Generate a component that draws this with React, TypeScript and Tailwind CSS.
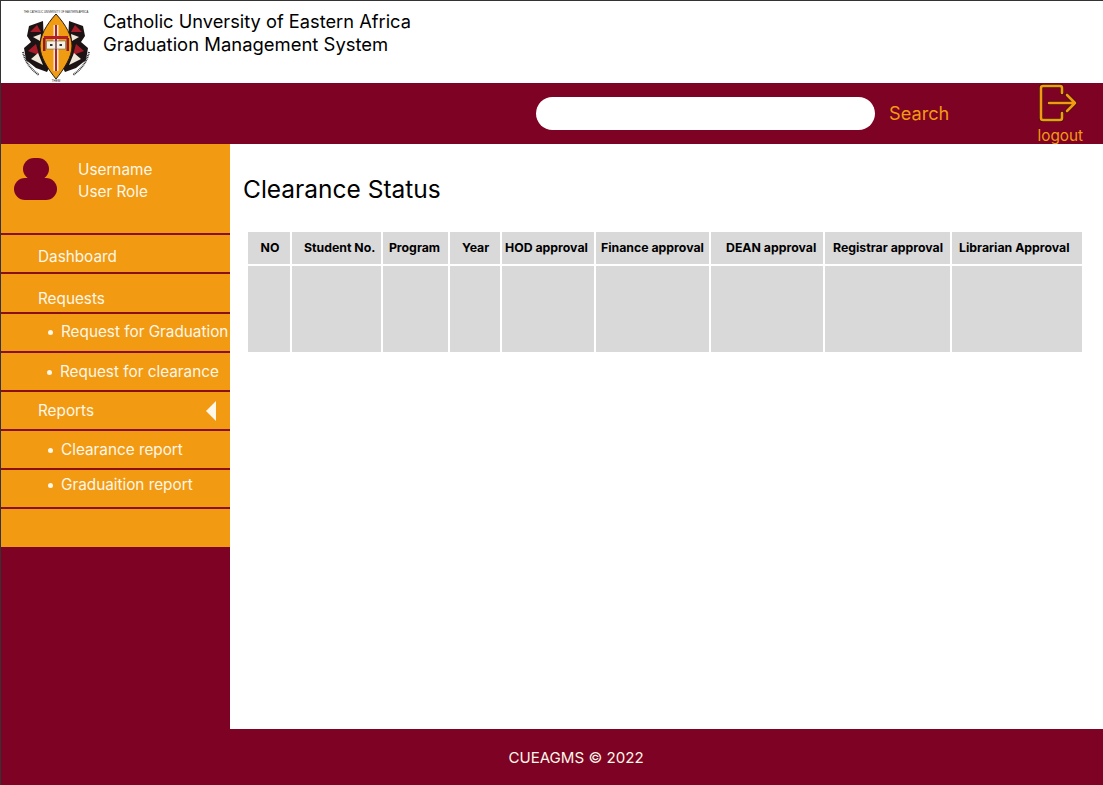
const columns = [
  { label: "NO", width: "w-[42px]", text: "text-center pl-[2px]" },
  { label: "Student No.", width: "w-[89px]", text: "pl-[12px]" },
  { label: "Program", width: "w-[65px]", text: "text-center pr-[2px]", up: true },
  { label: "Year", width: "w-[50px]", text: "pl-[12px]", up: true },
  { label: "HOD approval", width: "w-[92px]", text: "pl-[3px]", up: true },
  { label: "Finance approval", width: "w-[113px]", text: "pl-[5px]", up: true },
  { label: "DEAN approval", width: "w-[112px]", text: "pl-[15px]" },
  { label: "Registrar approval", width: "w-[125px]", text: "pl-[8px]", up: true },
  { label: "Librarian Approval", width: "w-[130px]", text: "pl-[7px]", up: true },
]

function Logo() {
  return (
    <svg width="72" height="74" viewBox="0 0 72 74" className="shrink-0">
      <text x="36" y="4.5" textAnchor="middle" fontSize="2.7" fill="#222" fontFamily="Liberation Sans, sans-serif">
        THE CATHOLIC UNIVERSITY OF EASTERN AFRICA
      </text>
      {/* side shields */}
      <path d="M23 13 L9 18 L7 28 L11 34 L4 40 L6 52 L16 60 L27 64 L34 50 L24 34 Z" fill="#1c1414" />
      <path d="M49 13 L63 18 L65 28 L61 34 L68 40 L66 52 L56 60 L45 64 L38 50 L48 34 Z" fill="#1c1414" />
      <path d="M10 24 L17 17 L21 24 Z M51 24 L55 17 L62 24 Z M8 43 L16 36 L19 47 Z M64 43 L56 36 L53 47 Z" fill="#a81c28" />
      <path d="M11 51 L18 45 L23 57 Z M61 51 L54 45 L49 57 Z M13 29 L21 26 L20 33 Z M59 29 L51 26 L52 33 Z" fill="#efe7da" />
      {/* motto arcs, unreadable at this size */}
      <path d="M3 44 Q6 58 19 67" fill="none" stroke="#333" strokeWidth="2" strokeDasharray="1 0.7" />
      <path d="M69 44 Q66 58 53 67" fill="none" stroke="#333" strokeWidth="2" strokeDasharray="1 0.7" />
      {/* spear shield */}
      <path d="M36 6 C46 17 52 28 52 38 C52 49 44 61 36 71 C28 61 20 49 20 38 C20 28 26 17 36 6 Z" fill="#f09c12" stroke="#2a1a10" strokeWidth="1" />
      {/* cross and book */}
      <path d="M33.5 17 H38.5 V63 H33.5 Z" fill="#efe7da" />
      <path d="M35 17 H37 V63 H35 Z" fill="#b3202a" />
      <path d="M24 28 H48 V31 H24 Z" fill="#b3202a" />
      <path d="M26.5 33 H35.5 V41 H26.5 Z M36.5 33 H45.5 V41 H36.5 Z" fill="#f5f0e6" stroke="#555" strokeWidth="0.5" />
      <path d="M23 30 H25.5 V43 H23 Z M46.5 30 H49 V43 H46.5 Z" fill="#8d1c26" />
      <path d="M30 36 H32.5 V38 H30 Z M39.5 36 H42 V38 H39.5 Z" fill="#333" />
      <text x="36" y="73.5" textAnchor="middle" fontSize="3" fill="#222" fontFamily="Liberation Sans, sans-serif">THEM</text>
    </svg>
  )
}

function NavRow({ label, bullet, arrow, pad }: { label?: string; bullet?: boolean; arrow?: boolean; pad: string }) {
  return (
    <div className={`flex items-center border-b-2 border-[#8a0f1c] whitespace-nowrap ${pad} ${bullet ? "" : "pl-[37px]"}`}>
      {bullet && <span className="mr-[8px] h-[5px] w-[5px] shrink-0 rounded-full bg-[#fff7e8]" />}
      <span className="flex-1">{label}</span>
      {arrow && <span className="mr-[14px] h-0 w-0 border-y-[10px] border-r-[10px] border-y-transparent border-r-[#fff7e8]" />}
    </div>
  )
}

export default function App() {
  return (
    <div className="flex h-[785px] w-[1103px] flex-col overflow-hidden border-l border-t border-[#333] bg-white font-['Inter',sans-serif]">
      <header className="flex h-[82px] shrink-0 items-start pl-[19px] pt-[7px]">
        <Logo />
        <div className="ml-[11px] pt-[2px] text-[18.25px] leading-[23px] text-black">
          <div>Catholic Unversity of Eastern Africa</div>
          <div className="text-[18.45px]">Graduation Management System</div>
        </div>
      </header>

      <div className="flex h-[61px] shrink-0 items-center bg-[#7d0224] pl-[535px]">
        <div className="h-[33px] w-[339px] rounded-full bg-white" />
        <span className="ml-[14px] text-[18.2px] text-[#f39a12]">Search</span>
        <div className="ml-[88px] flex w-[46px] flex-col items-center">
          <svg width="38" height="38" viewBox="0 0 38 38" fill="none" strokeLinejoin="round" strokeLinecap="round" className="-ml-[4px] mt-[1px]">
            <g stroke="#3a1208" strokeWidth="4">
              <path d="M23 9 V4 Q23 2 21 2 H4 Q2 2 2 4 V34 Q2 36 4 36 H21 Q23 36 23 34 V29" />
              <path d="M10 19 H36 M28 11 L36 19 L28 27" />
            </g>
            <g stroke="#f39a12" strokeWidth="2.6">
              <path d="M23 9 V4 Q23 2 21 2 H4 Q2 2 2 4 V34 Q2 36 4 36 H21 Q23 36 23 34 V29" />
              <path d="M10 19 H36 M28 11 L36 19 L28 27" />
            </g>
          </svg>
          <span className="mt-[5px] text-[15.3px] leading-[18px] text-[#f39a12]">logout</span>
        </div>
      </div>

      <div className="flex min-h-0 flex-1">
        <aside className="w-[229px] shrink-0 bg-[#7d0224]">
          <div className="bg-[#f19a12] text-[15.3px] text-[#fff7e8]">
            <div className="flex h-[91px] border-b-2 border-[#8a0f1c] pl-[13px] pt-[14px]">
              <div className="flex w-[43px] flex-col items-center">
                <div className="h-[22px] w-[26px] rounded-full bg-[#7d0224]" />
                <div className="-mt-[2px] h-[22px] w-[43px] rounded-full bg-[#7d0224]" />
              </div>
              <div className="ml-[21px] pt-[1px] leading-[21.5px]">
                <div>Username</div>
                <div>User Role</div>
              </div>
            </div>
            <NavRow label="Dashboard" pad="h-[39px] pt-[8px]" />
            <NavRow label="Requests" pad="h-[40px] pt-[12px]" />
            <NavRow label="Request for Graduation" bullet pad="h-[39px] pl-[47px]" />
            <NavRow label="Request for clearance" bullet pad="h-[39px] pl-[46px] pt-[2px]" />
            <NavRow label="Reports" arrow pad="h-[39px] pt-[1px]" />
            <NavRow label="Clearance report" bullet pad="h-[39px] pl-[47px] pt-[2px]" />
            <NavRow label="Graduaition report" bullet pad="h-[39px] pl-[47px] pb-[7px]" />
            <div className="h-[38px]" />
          </div>
        </aside>

        <main className="min-w-0 flex-1 pl-[13px] pt-[30px]">
          <h1 className="text-[24.5px] leading-[30px] text-black">Clearance Status</h1>
          <div className="ml-[5px] mt-[28px] flex gap-[2px] text-[12.3px] font-bold text-black">
            {columns.map((col) => (
              <div key={col.label} className={`flex flex-col gap-[2px] ${col.width}`}>
                <div className={`h-[32px] whitespace-nowrap bg-[#d9d9d9] leading-[32px] ${col.text} ${col.up ? "pb-[1px] leading-[30px]" : ""}`}>
                  {col.label}
                </div>
                <div className="h-[86px] bg-[#d9d9d9]" />
              </div>
            ))}
          </div>
        </main>
      </div>

      <footer className="flex h-[56px] shrink-0 items-center justify-center bg-[#7d0224] pl-[48px] pt-[3px] text-[15.1px] text-[#fff7e8]">
        CUEAGMS © 2022
      </footer>
    </div>
  )
}
